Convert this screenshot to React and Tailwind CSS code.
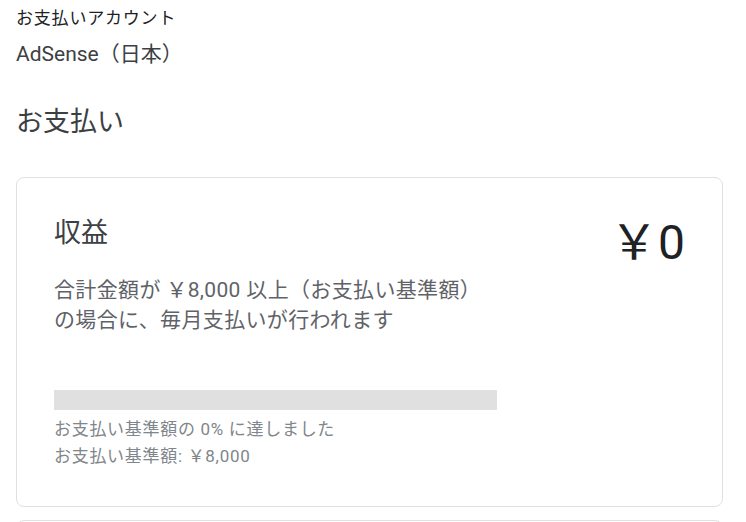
export default function App() {
  return (
    <div className="min-h-screen bg-white px-[16px] pt-[6px] font-['Roboto','Noto_Sans_CJK_JP',sans-serif] text-[#202124]">
      <div className="text-[17px] leading-[24px] tracking-[0.8px]">お支払いアカウント</div>
      <div className="mt-[10px] text-[21px] leading-[28px] text-[#3c4043]">AdSense（日本）</div>
      <h1 className="mt-[36px] text-[27px] leading-[36px] font-normal text-[#3c4043]">お支払い</h1>

      <div className="mt-[37px] w-[707px] rounded-[8px] border border-[#e0e0e0] px-[37px] pt-[39px] pb-[36px]">
        <div className="flex items-start justify-between">
          <div>
            <h2 className="text-[27px] leading-[32px] font-normal text-[#3c4043]">収益</h2>
            <p className="mt-[26px] text-[21px] leading-[30px] tracking-[0.35px] text-[#5f6368]">
              合計金額が ￥8,000 以上（お支払い基準額）
              <br />
              の場合に、毎月支払いが行われます
            </p>
          </div>
          <div className="text-[48px] leading-[52px]">￥0</div>
        </div>

        <div className="mt-[55px] h-[20px] w-[443px] bg-[#e0e0e0]" />
        <div className="mt-[6px] text-[17px] leading-[27px] tracking-[0.7px] text-[#80868b]">
          <div>お支払い基準額の 0% に達しました</div>
          <div>お支払い基準額: ￥8,000</div>
        </div>
      </div>

      <div className="mt-[13px] h-[200px] w-[707px] rounded-[8px] border border-[#e0e0e0]" />
    </div>
  );
}
